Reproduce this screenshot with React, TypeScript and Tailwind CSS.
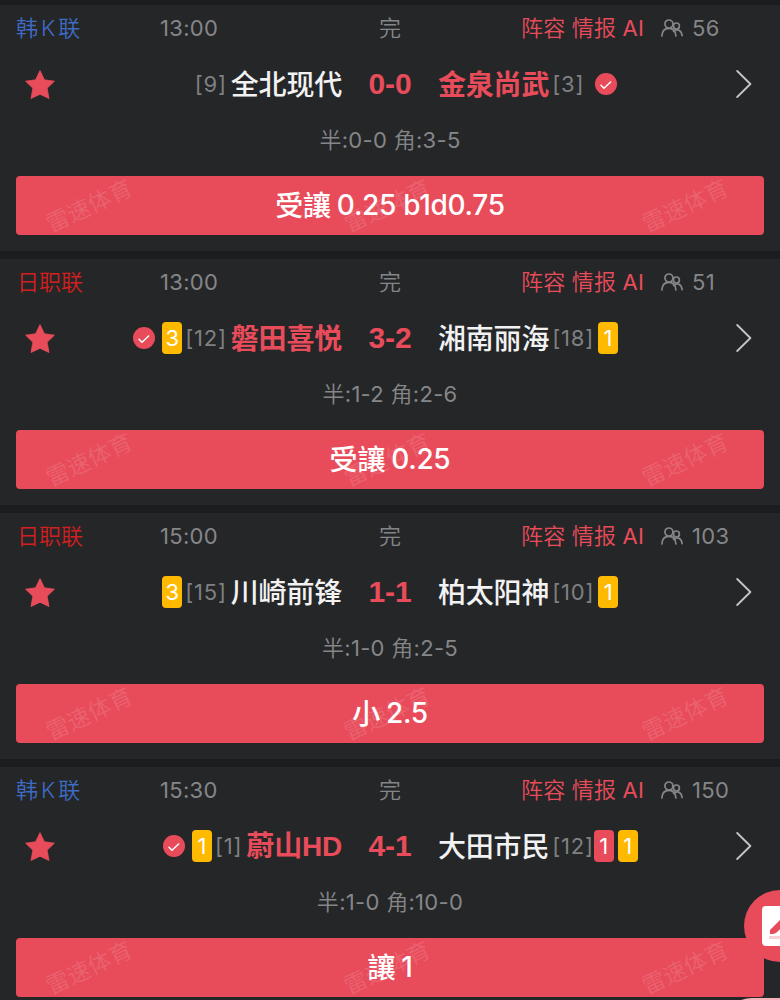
import React from 'react';
import clsx from 'clsx';

type Badge = { color: 'red' | 'yellow'; count: number };

type Team = {
  name: string;
  latin?: string;
  rank: number;
  pick?: boolean;
  badges: Badge[];
};

type Match = {
  id: number;
  league: string[];
  time: string;
  viewers: number;
  home: Team;
  away: Team;
  score: string;
  half: string;
  corner: string;
  tip: string;
  line: string;
};

const matches: Match[] = [
  {
    id: 1,
    league: ['韩', 'K', '联'],
    time: '13:00',
    viewers: 56,
    home: { name: '全北现代', rank: 9, badges: [] },
    away: { name: '金泉尚武', rank: 3, pick: true, badges: [] },
    score: '0-0',
    half: '0-0',
    corner: '3-5',
    tip: '受讓',
    line: '0.25 b1d0.75',
  },
  {
    id: 2,
    league: ['日职联'],
    time: '13:00',
    viewers: 51,
    home: { name: '磐田喜悦', rank: 12, pick: true, badges: [{ color: 'yellow', count: 3 }] },
    away: { name: '湘南丽海', rank: 18, badges: [{ color: 'yellow', count: 1 }] },
    score: '3-2',
    half: '1-2',
    corner: '2-6',
    tip: '受讓',
    line: '0.25',
  },
  {
    id: 3,
    league: ['日职联'],
    time: '15:00',
    viewers: 103,
    home: { name: '川崎前锋', rank: 15, badges: [{ color: 'yellow', count: 3 }] },
    away: { name: '柏太阳神', rank: 10, badges: [{ color: 'yellow', count: 1 }] },
    score: '1-1',
    half: '1-0',
    corner: '2-5',
    tip: '小',
    line: '2.5',
  },
  {
    id: 4,
    league: ['韩', 'K', '联'],
    time: '15:30',
    viewers: 150,
    home: { name: '蔚山', latin: 'HD', rank: 1, pick: true, badges: [{ color: 'yellow', count: 1 }] },
    away: {
      name: '大田市民',
      rank: 12,
      badges: [
        { color: 'red', count: 1 },
        { color: 'yellow', count: 1 },
      ],
    },
    score: '4-1',
    half: '1-0',
    corner: '10-0',
    tip: '讓',
    line: '1',
  },
];

const StarIcon = () => (
  <svg className="w-[30px] h-[30px]" viewBox="0 0 30 30">
    <path
      d="M15 0.6l4.4 9.2 10 1.4-7.3 7 1.9 10.3L15 24.3l-9 4.2 1.9-10.3-7.3-7 10-1.4z"
      fill="#e84c5b"
      stroke="#e84c5b"
      strokeWidth="0.8"
      strokeLinejoin="round"
    />
  </svg>
);

const CheckIcon = () => (
  <svg className="w-[22px] h-[22px] shrink-0" viewBox="0 0 22 22">
    <circle cx="11" cy="11" r="11" fill="#e84c5b" />
    <path d="M6 12.2l3 3 6.6-6.2" fill="none" stroke="#fff" strokeWidth="1.5" strokeLinecap="round" strokeLinejoin="round" />
  </svg>
);

const PeopleIcon = () => (
  <svg className="w-[22px] h-[18px]" viewBox="0 0 22 18" fill="none" stroke="#858688" strokeWidth="1.7" strokeLinecap="round">
    <circle cx="7.9" cy="5" r="4" />
    <path d="M0.9 17c0.2-4.4 2.7-7.6 7-7.6s6.8 3.2 7 7.6" />
    <circle cx="15.4" cy="7" r="3" />
    <path d="M12.6 12.4c4.5-3.4 8.1-0.6 8.5 4.2" />
  </svg>
);

const Chevron = () => (
  <svg className="w-4 h-7" viewBox="0 0 16 28" fill="none" stroke="#c4c5c6" strokeWidth="1.8" strokeLinecap="round" strokeLinejoin="round">
    <path d="M1.2 1l13.2 13-13.2 13" />
  </svg>
);

const Card: React.FC<{ badge: Badge }> = ({ badge }) => (
  <span
    className={clsx(
      'flex items-center justify-center w-5 h-8 rounded-[4px] text-white text-[22px] leading-none',
      badge.color === 'red' ? 'bg-[#e84c5b]' : 'bg-[#ffba00]'
    )}
  >
    {badge.count}
  </span>
);

const Rank: React.FC<{ value: number }> = ({ value }) => (
  <span className="text-[22px] leading-none tracking-[0.8px] text-[#7f8082]">[{value}]</span>
);

const TeamName: React.FC<{ team: Team }> = ({ team }) => (
  <span
    className={clsx(
      'mt-px text-[28px] leading-none whitespace-nowrap tracking-[-0.2px]',
      team.pick ? 'text-[#e84c5b] font-bold' : 'text-[#f2f2f3] font-medium'
    )}
  >
    {team.name}
    {team.latin && <span className="font-['Liberation_Sans']">{team.latin}</span>}
  </span>
);

const Watermark = () => (
  <span className="w-[92px] pt-0.5 text-center text-[23px] leading-none whitespace-nowrap text-white/12 -rotate-[25deg]">雷速体育</span>
);

const MatchCard: React.FC<{ match: Match }> = ({ match }) => {
  const { home, away } = match;
  return (
    <section className="h-[246px] bg-[#252628]">
      <div className="grid grid-cols-[144px_219px_142px_140px_119px] items-center h-[46px] pl-4 text-[22px] font-[350] leading-none text-[#858688]">
        {match.league.length > 1 ? (
          <span className="flex gap-[3px] text-[#3e6cc4]">
            {match.league.map((part) => (
              <span key={part}>{part}</span>
            ))}
          </span>
        ) : (
          <span className="pl-px text-[#d21f1f]">{match.league[0]}</span>
        )}
        <span className="font-normal tracking-[0.3px]">{match.time}</span>
        <span>完</span>
        <span className="whitespace-nowrap tracking-[0.2px] text-[#e84c5b]">
          阵容 情报 <span className="font-normal">AI</span>
        </span>
        <span className="flex items-center gap-[9px]">
          <PeopleIcon />
          <span className="font-normal tracking-[0.3px]">{match.viewers}</span>
        </span>
      </div>

      <div className="grid grid-cols-[80px_262px_96px_262px_80px] items-center h-[66px]">
        <div className="pl-[25px] pt-px">
          <StarIcon />
        </div>
        <div className="flex items-center justify-end">
          {home.pick && (
            <span className="mr-[7px]">
              <CheckIcon />
            </span>
          )}
          {home.badges.map((badge) => (
            <Card key={badge.color} badge={badge} />
          ))}
          <span className="ml-[3px] mr-[4px] flex">
            <Rank value={home.rank} />
          </span>
          <TeamName team={home} />
        </div>
        <span className="text-center font-['Liberation_Sans'] text-[30px] leading-none font-bold tracking-[-0.2px] text-[#e84c5b]">
          {match.score}
        </span>
        <div className="flex items-center">
          <TeamName team={away} />
          <span className={clsx('ml-[3px] flex', away.badges.length > 1 ? 'mr-0' : 'mr-1')}>
            <Rank value={away.rank} />
          </span>
          <span className="flex gap-1">
            {away.badges.map((badge) => (
              <Card key={badge.color} badge={badge} />
            ))}
          </span>
          {away.pick && (
            <span className="ml-[7px]">
              <CheckIcon />
            </span>
          )}
        </div>
        <div className="pl-9">
          <Chevron />
        </div>
      </div>

      <div className="flex items-center justify-center h-[46px] text-[22px] font-[350] leading-none tracking-[0.3px] text-[#858688]">
        <p>
          半<span className="font-normal">:{match.half} </span>角<span className="font-normal">:{match.corner}</span>
        </p>
      </div>

      <div className="relative flex items-center justify-center mx-4 mt-[13px] h-[59px] rounded-[4px] bg-[#e84c5b]">
        <div className="absolute inset-0 flex items-center justify-between pl-[27px] pr-[33px]">
          <Watermark />
          <Watermark />
          <Watermark />
        </div>
        <span className="relative flex gap-[6px] text-[28px] leading-none font-medium text-white">
          <span className="pt-px tracking-[-0.2px]">{match.tip}</span>
          <span className="tracking-[-0.3px]">{match.line}</span>
        </span>
      </div>
    </section>
  );
};

const ComposeButton = () => (
  <button className="absolute left-[744px] top-[890px] w-[72px] h-[72px] rounded-full bg-[#e84c5b] flex items-center pl-[18px]">
    <svg className="w-10 h-10 shrink-0" viewBox="0 0 40 40">
      <rect width="40" height="40" rx="4" fill="#fff" />
      <path d="M8 28v-4L25 7l5 5-16 15-3 1z" fill="#e84c5b" />
      <rect x="7" y="30" width="26" height="3" fill="#f9d0d5" />
    </svg>
  </button>
);

const App: React.FC = () => {
  return (
    <div className="relative w-[780px] h-[1000px] overflow-hidden bg-[#1c1d1f] font-['Inter','Noto_Sans_CJK_SC',sans-serif]">
      <main className="flex flex-col gap-2 pt-[5px]">
        {matches.map((match) => (
          <MatchCard key={match.id} match={match} />
        ))}
      </main>
      <ComposeButton />
      <div className="absolute left-[722px] top-[998px] w-24 h-24 rounded-[30px] bg-[#f4b3ba]" />
    </div>
  );
};

export default App;
